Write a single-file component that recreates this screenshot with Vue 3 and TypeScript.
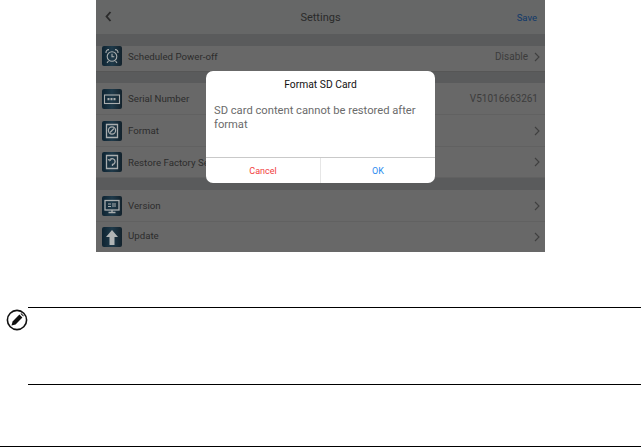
<script setup lang="ts">
const chevron = 'M1 1L5 5L1 9'
</script>

<template>
  <div class="page">
    <div class="screen">
      <header class="head">
        <svg class="back" width="7" height="11" viewBox="0 0 7 11"><path d="M5.5 1 L1.6 5.5 L5.5 10" fill="none" stroke="#2b2b2b" stroke-width="1.9"/></svg>
        <span class="title">Settings</span>
        <span class="save">Save</span>
      </header>
      <div class="gap g1"></div>
      <div class="row top">
        <span class="ic"><svg width="20" height="20" viewBox="0 0 20 20" fill="none" stroke="#a9adae" stroke-width="1.1"><circle cx="10" cy="10.5" r="4.8"/><path d="M10 7.8V10.8H12.3M4 7C3.8 5 5 3.5 7 3.6M16 7C16.2 5 15 3.5 13 3.6M6.5 15L5 16.8M13.5 15L15 16.8"/></svg></span>
        <span class="lbl">Scheduled Power-off</span>
        <span class="val gapped">Disable</span>
        <svg class="chev" width="6" height="10" viewBox="0 0 6 10"><path :d="chevron" fill="none" stroke="#3f3f3f" stroke-width="1.1"/></svg>
      </div>
      <div class="gap g2"></div>
      <div class="row">
        <span class="ic"><svg width="20" height="20" viewBox="0 0 20 20" fill="none" stroke="#a9adae"><rect x="2.5" y="6" width="15" height="8.5" stroke-width="1.1"/><path d="M5.5 10.2H14.5" stroke-width="2.2" stroke-dasharray="2 1"/></svg></span>
        <span class="lbl">Serial Number</span>
        <span class="val">V51016663261</span>
      </div>
      <div class="row">
        <span class="ic"><svg width="20" height="20" viewBox="0 0 20 20" fill="none" stroke="#a9adae"><path d="M4.5 3.5H15.5V16.5H4.5Z" stroke-width="1.3"/><circle cx="10" cy="9.5" r="3.6" stroke-width="1.2"/><path d="M8 11.5L12 7.5" stroke-width="1.2"/></svg></span>
        <span class="lbl">Format</span>
        <svg class="chev" width="6" height="10" viewBox="0 0 6 10"><path :d="chevron" fill="none" stroke="#3f3f3f" stroke-width="1.1"/></svg>
      </div>
      <div class="row short">
        <span class="ic"><svg width="20" height="20" viewBox="0 0 20 20" fill="none" stroke="#a9adae"><path d="M4.5 3.5H15.5V16.5H4.5Z" stroke-width="1.3"/><path d="M7.5 8A3 3 0 1 1 10.5 12.5V14" stroke-width="1.3"/><path d="M6 7L7.5 9L9.5 7.5" stroke-width="1"/></svg></span>
        <span class="lbl">Restore Factory Settings</span>
        <svg class="chev" width="6" height="10" viewBox="0 0 6 10"><path :d="chevron" fill="none" stroke="#3f3f3f" stroke-width="1.1"/></svg>
      </div>
      <div class="gap g3"></div>
      <div class="row">
        <span class="ic"><svg width="20" height="20" viewBox="0 0 20 20" fill="none" stroke="#a9adae"><rect x="3" y="4.5" width="14" height="9.5" stroke-width="1.3"/><path d="M6 8H9M6 10.5H9M11 7V11M13 7V11" stroke-width="1"/><path d="M10 14V16.5M6.5 16.5H13.5" stroke-width="1.4"/></svg></span>
        <span class="lbl">Version</span>
        <svg class="chev" width="6" height="10" viewBox="0 0 6 10"><path :d="chevron" fill="none" stroke="#3f3f3f" stroke-width="1.1"/></svg>
      </div>
      <div class="row last">
        <span class="ic"><svg width="20" height="20" viewBox="0 0 20 20"><path d="M10 3L16 10H12.5V18H7.5V10H4Z" fill="#b0b4b5"/></svg></span>
        <span class="lbl up">Update</span>
        <svg class="chev" width="6" height="10" viewBox="0 0 6 10"><path :d="chevron" fill="none" stroke="#3f3f3f" stroke-width="1.1"/></svg>
      </div>

      <div class="dialog">
        <div class="dtitle">Format SD Card</div>
        <div class="dmsg">SD card content cannot be restored after format</div>
        <div class="dbtns">
          <span class="cancel">Cancel</span>
          <span class="ok">OK</span>
        </div>
      </div>
    </div>

    <div class="note">
      <svg class="pen" width="22" height="22" viewBox="0 0 22 22">
        <circle cx="11" cy="11" r="9.6" fill="#fff" stroke="#111" stroke-width="1.6"/>
        <path d="M5.5 16.5L6.6 12.4L13.4 5.6L16.4 8.6L9.6 15.4Z" fill="#111"/>
        <path d="M14.4 4.7L15.3 4.2L17.8 6.7L17.3 7.6Z" fill="#111"/>
      </svg>
    </div>
    <div class="foot"></div>
  </div>
</template>

<style scoped>
.page {
  width: 641px;
  height: 447px;
  background: #fff;
  overflow: hidden;
  font-family: Roboto, "Liberation Sans", sans-serif;
}
.screen {
  position: relative;
  width: 449px;
  height: 252px;
  margin-left: 96px;
  background: #686868;
  display: flex;
  flex-direction: column;
}
.head {
  height: 34px;
  flex: none;
  display: flex;
  align-items: center;
  justify-content: space-between;
  padding: 1px 8px 0 9px;
  box-sizing: border-box;
  position: relative;
  background: #666767;
}
.back { display: block; margin-top: -2px; }
.title {
  position: absolute;
  left: 0;
  right: 0;
  text-align: center;
  font-size: 11px;
  color: #2a2a2a;
}
.save { font-size: 9.5px; color: #10396a; }
.gap { flex: none; background: #5a5b5c; }
.g1 { height: 12px; }
.g2 { height: 11px; }
.g3 { height: 12px; }
.row {
  height: 32px;
  flex: none;
  box-sizing: border-box;
  display: flex;
  align-items: center;
  padding: 0 5px 0 6px;
  border-bottom: 1px solid #616161;
  color: #2c2c2c;
  font-size: 9.7px;
}
.short { height: 31px; }
.top {
  height: 26px;
  padding-bottom: 4px;
  border-bottom-color: #565656;
}
.top .ic { margin-top: -1px; }
.last {
  height: 30px;
  border-bottom: 0;
}
.up { margin-top: -4px; }
.ic {
  width: 20px;
  height: 20px;
  flex: none;
  border-radius: 2px;
  background: linear-gradient(90deg, #0d2331, #1f3a4a 50%, #13222c);
  display: flex;
  align-items: center;
  justify-content: center;
  margin-right: 6px;
}
.lbl { flex: 1; }
.val { color: #3c3c3c; margin-right: 2px; font-size: 10px; }
.gapped { margin-right: 6px; }
.dialog {
  position: absolute;
  left: 110px;
  top: 71px;
  width: 229px;
  height: 112px;
  background: #fff;
  border-radius: 7px;
  display: flex;
  flex-direction: column;
  overflow: hidden;
}
.dtitle {
  height: 28px;
  line-height: 28px;
  text-align: center;
  font-size: 10.3px;
  color: #111;
}
.dmsg {
  height: 58px;
  box-sizing: border-box;
  padding: 5px 8px 0 8px;
  font-size: 11.2px;
  line-height: 14px;
  color: #6b6b6b;
}
.dbtns {
  flex: 1;
  display: flex;
  border-top: 1px solid #c9c9c9;
  font-size: 9px;
}
.cancel, .ok {
  width: 50%;
  display: flex;
  align-items: center;
  justify-content: center;
}
.cancel { color: #f23d3d; border-right: 1px solid #e6e6e6; }
.ok { color: #2a8cf0; }
.note {
  position: relative;
  box-sizing: border-box;
  margin: 55px 0 0 28px;
  height: 78px;
  border-top: 1px solid #000;
  border-bottom: 1px solid #000;
}
.pen { position: absolute; left: -22px; top: 1px; }
.foot {
  margin-top: 61px;
  border-top: 1px solid #000;
}
</style>
